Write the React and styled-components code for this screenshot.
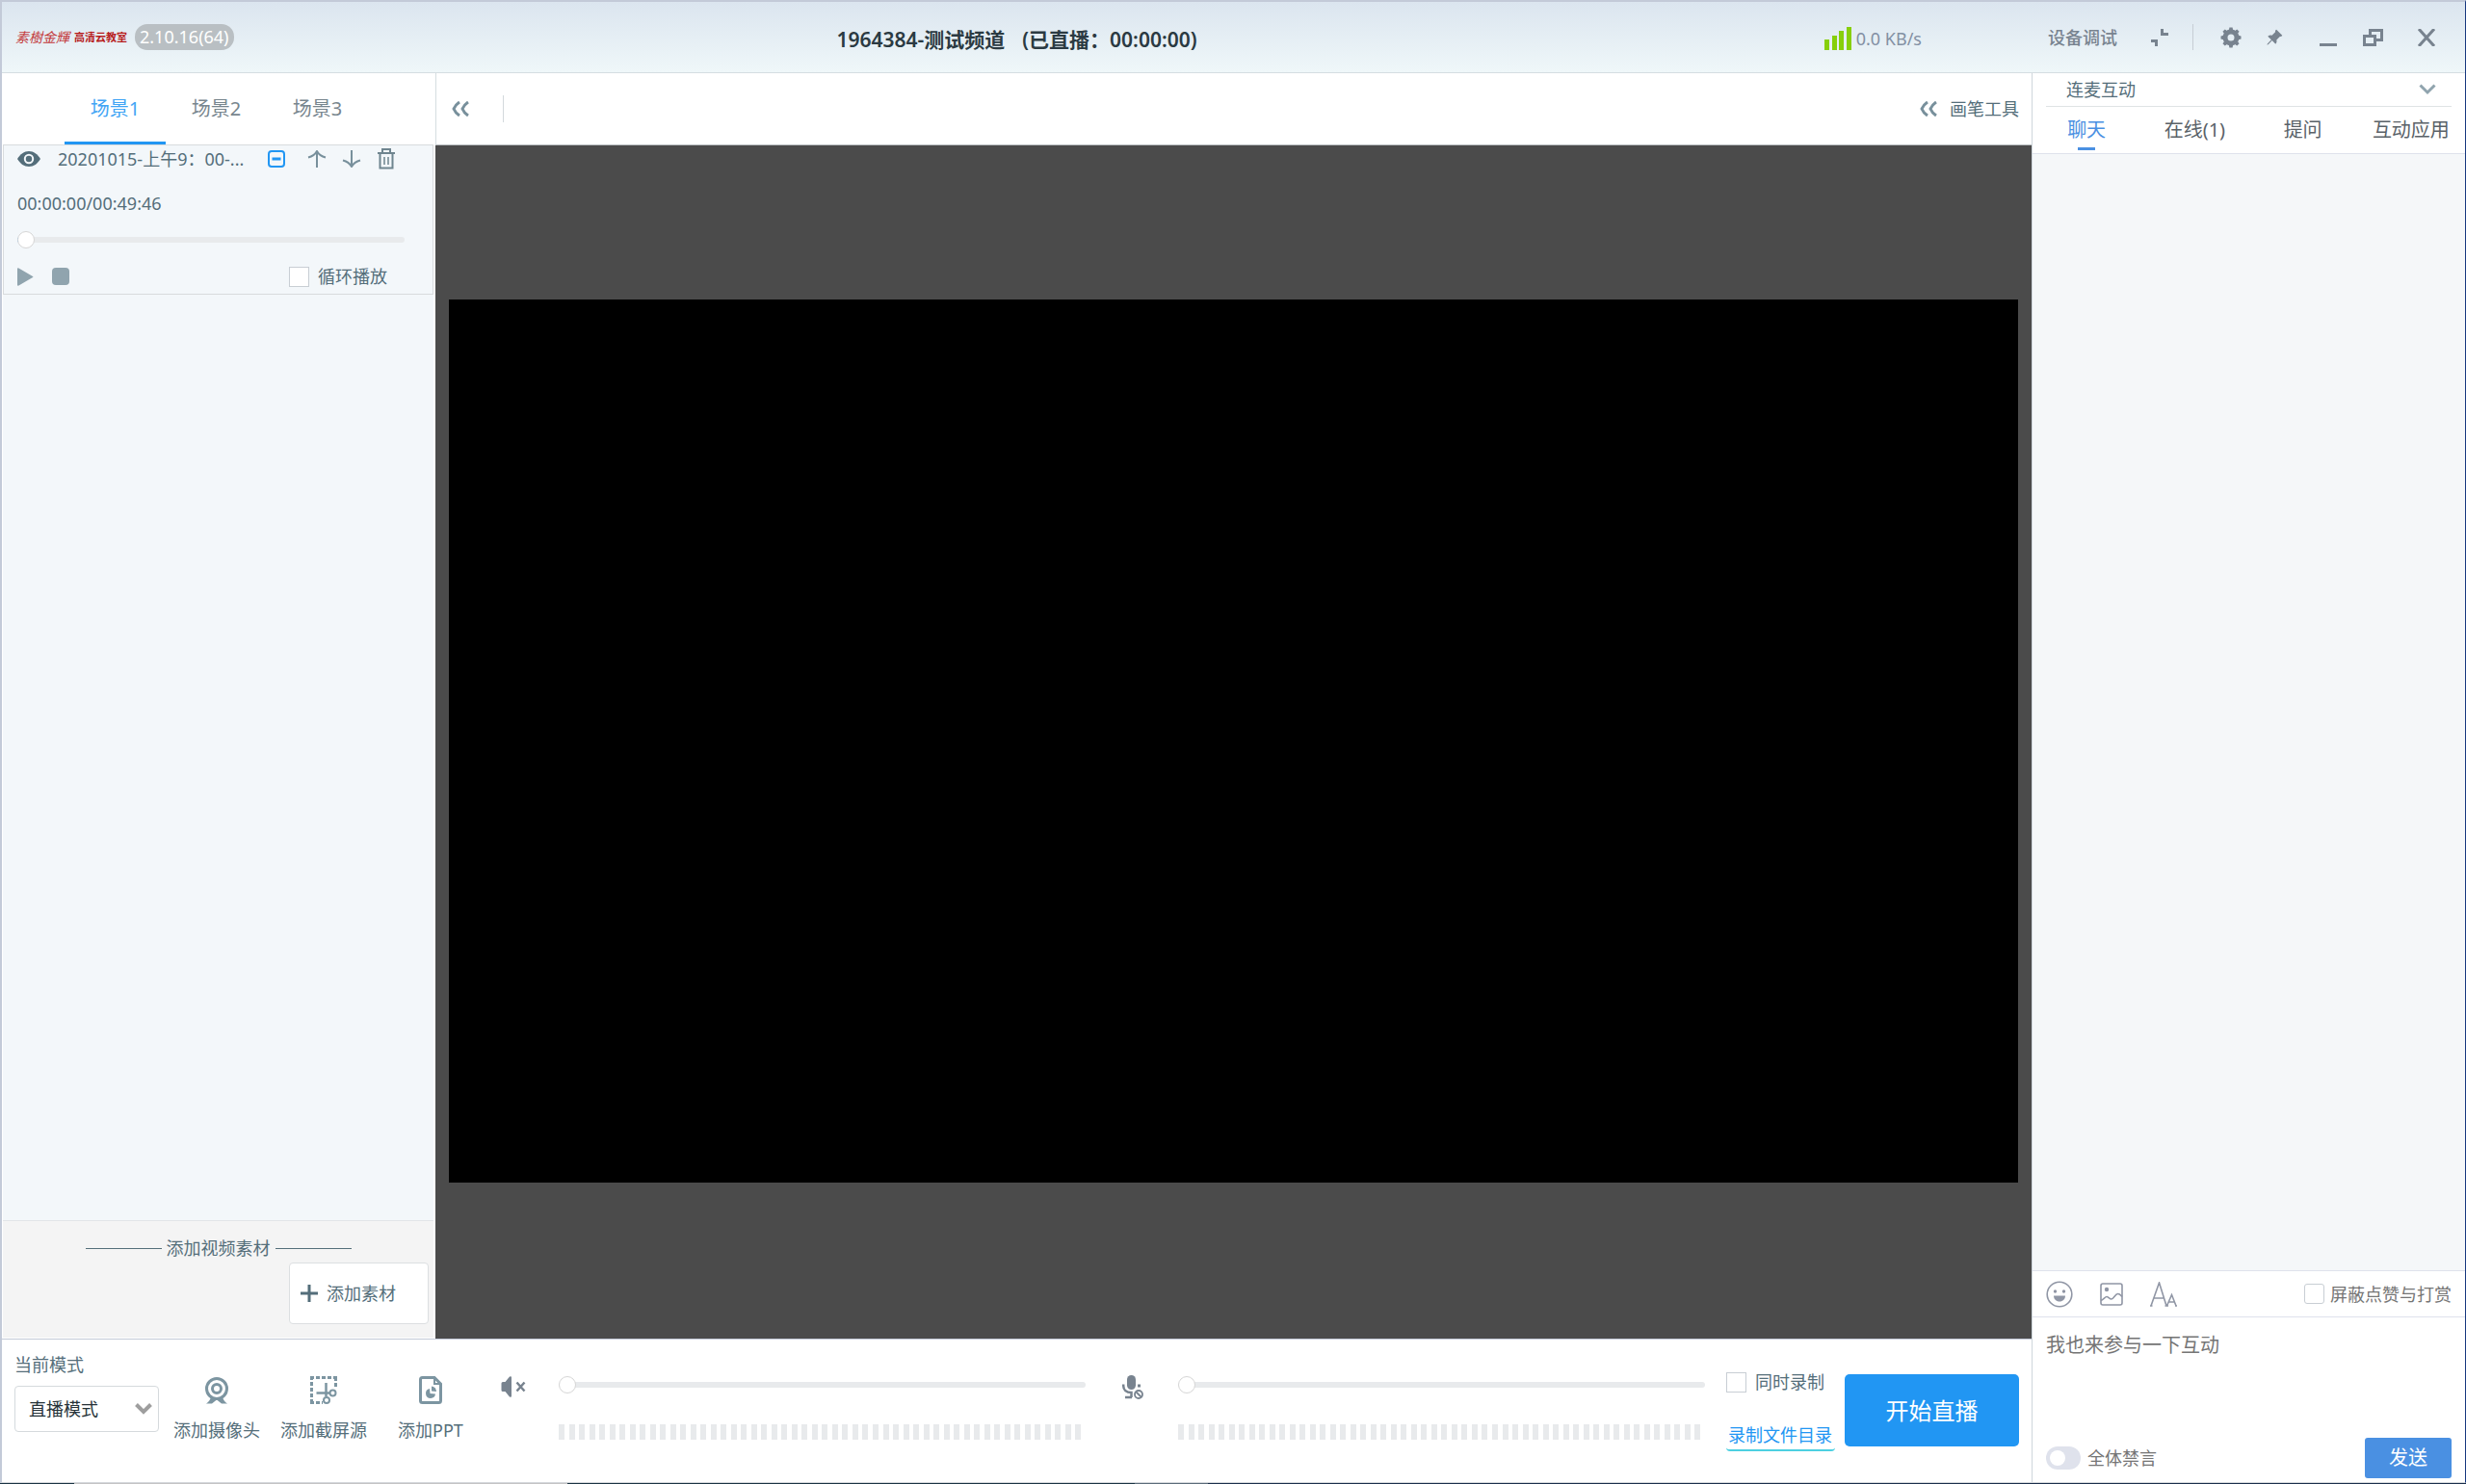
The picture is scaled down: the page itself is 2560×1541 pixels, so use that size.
import styled, { createGlobalStyle } from "styled-components";
import React, { useState } from 'react';
import { BsPinAngleFill } from "react-icons/bs";

const GlobalStyle = createGlobalStyle`
  * {
    box-sizing: border-box;
  }

  body {
    margin: 0;
    color: #546e7a;
    font-family: "Noto Sans", "Noto Sans CJK SC", sans-serif;
    font-size: 18px;
    line-height: 24px;
  }

  button, input, select, textarea {
    font: inherit;
    color: inherit;
    margin: 0;
  }

  button {
    padding: 0;
    border: 0;
    background: none;
    cursor: pointer;
  }

  svg {
    display: block;
    flex: none;
  }
`;

const Page = styled.div`
  display: flex;
  flex-direction: column;
  min-height: 100vh;
`;

const Window = styled.div`
  flex: 1;
  display: flex;
  flex-direction: column;
  border: 2px solid #c3cad8;
  border-right: 1px solid #17387f;
  border-bottom: 1px solid #d5d8dc;
  background: #fff;
`;

const TaskbarEdge = styled.div`
  height: 1px;
  background: linear-gradient(to right,
    #1b3444 3%, #c4c4c4 3%, #c4c4c4 23%,
    #1b3444 23%, #1b3444 46%, #5c6c7a 46%, #5c6c7a 49%, #1b2f4c 49%);
`;

/* header */

const Header = styled.header`
  display: flex;
  height: 74px;
  border-bottom: 1px solid #d5dde1;
  background: linear-gradient(to bottom, #dbe5ef, #eff7f9);
`;

const HeaderMain = styled.div`
  flex: 1;
  display: grid;
  grid-template-columns: 1fr auto 1fr;
  align-items: center;
`;

const Brand = styled.div`
  display: flex;
  align-items: center;
  padding-left: 14px;
`;

const BrandScript = styled.span`
  color: #c33a3c;
  font-size: 14px;
  font-style: italic;
`;

const BrandName = styled.span`
  margin-left: 5px;
  color: #b71c1c;
  font-size: 11px;
  font-weight: 700;
`;

const Version = styled.span`
  margin-left: 8px;
  padding: 0 5px;
  border-radius: 13px;
  background: #b9bfc3;
  color: #fff;
  line-height: 27px;
`;

const Title = styled.h1`
  display: flex;
  gap: 18px;
  margin: 0;
  padding-top: 4px;
  color: #2b3a42;
  font-size: 21px;
  font-weight: 600;
`;

const Signal = styled.div`
  display: flex;
  align-items: center;
  justify-content: flex-end;
  gap: 5px;
  padding: 3px 114px 0 0;
  color: #8390a3;
`;

const HeaderTools = styled.div`
  display: flex;
  align-items: center;
  width: 450px;
  padding: 0 27px 0 17px;
  color: #78838f;
`;

const TextButton = styled.button`
  font-weight: 500;
`;

const IconButton = styled.button`
  display: flex;
  align-items: center;
  justify-content: center;
  width: ${props => props.$width || 24}px;
  height: 28px;
  margin-left: ${props => props.$gap || 0}px;
`;

const HeaderDivider = styled.span`
  width: 1px;
  height: 27px;
  margin-left: 22px;
  background: #c6cdd4;
`;

/* body */

const Body = styled.div`
  flex: 1;
  display: flex;
`;

const Workspace = styled.div`
  flex: 1;
  display: flex;
  flex-direction: column;
  min-width: 0;
`;

const Upper = styled.div`
  flex: 1;
  display: flex;
`;

const Sidebar = styled.aside`
  display: flex;
  flex-direction: column;
  width: 450px;
  border-right: 2px solid #fff;
  border-left: 1px solid #fff;
`;

const SceneTabs = styled.div`
  display: flex;
  height: 74px;
  padding-left: 64px;
`;

const SceneTab = styled.button`
  width: 105px;
  border-top: 3px solid transparent;
  border-bottom: 3px solid ${props => props.$active ? "#2196f3" : "transparent"};
  color: ${props => props.$active ? "#42a5f5" : "#78868e"};
  font-size: 20px;
`;

const SceneList = styled.div`
  flex: 1;
  background: #f3f7fa;
`;

const MediaCard = styled.div`
  padding: 0 29px 4px 14px;
  border: 1px solid #d8dbdd;
`;

const MediaHead = styled.div`
  display: flex;
  align-items: center;
  height: 28px;
  padding-right: 9px;
`;

const MediaName = styled.span`
  flex: 1;
  margin-left: 18px;
  white-space: nowrap;
`;

const MediaTime = styled.div`
  margin: 20px 0 17px;
`;

const MediaFoot = styled.div`
  display: flex;
  align-items: center;
  height: 28px;
  margin-top: 15px;
  padding-right: 18px;
  color: #90a4ae;

  label {
    margin-left: auto;
  }
`;

const Range = styled.input.attrs({ type: "range" })`
  display: block;
  width: 100%;
  height: 18px;
  appearance: none;
  background: transparent;

  &::-webkit-slider-runnable-track {
    height: 6px;
    border-radius: 3px;
    background: ${props => props.$played ? "linear-gradient(to right, #2196f3 3px, #e8eaec 3px)" : "#e8eaec"};
  }

  &::-webkit-slider-thumb {
    appearance: none;
    width: 18px;
    height: 18px;
    margin-top: -6px;
    border: 1px solid #d6d6d6;
    border-radius: 50%;
    background: #fff;
  }
`;

const CheckLabel = styled.label`
  display: flex;
  align-items: center;
  gap: ${props => props.$gap || 9}px;
  color: ${props => props.$color || "#546e7a"};
  white-space: nowrap;
`;

const Checkbox = styled.input.attrs({ type: "checkbox" })`
  appearance: none;
  width: 21px;
  height: 21px;
  border: 1px solid #c8ced4;
  border-radius: ${props => props.$round || 0}px;
  background: #fff;

  &:checked {
    background: #2196f3;
  }
`;

const AddMedia = styled.section`
  display: flex;
  flex-direction: column;
  gap: 3px;
  padding: 16px 5px 14px;
  border-top: 1px solid #e2e5e8;
  border-bottom: 1px solid #fff;
  background: #f4f4f4;
`;

const AddMediaTitle = styled.div`
  display: flex;
  align-items: center;
  justify-content: center;
  gap: 5px;

  &::before, &::after {
    content: "";
    width: 79px;
    height: 1px;
    background: #546e7a;
  }
`;

const AddMediaButton = styled.button`
  display: flex;
  align-items: center;
  align-self: flex-end;
  gap: 9px;
  width: 145px;
  height: 64px;
  padding-left: 11px;
  border: 1px solid #dcdfe1;
  border-radius: 4px;
  background: #fff;
`;

const Center = styled.main`
  flex: 1;
  display: flex;
  flex-direction: column;
`;

const CenterBar = styled.div`
  display: flex;
  align-items: center;
  height: 75px;
  padding: 0 13px;
  border-left: 1px solid #d5dde1;
  border-bottom: 1px solid #b5babd;
`;

const BarDivider = styled.span`
  width: 1px;
  height: 28px;
  margin-left: 32px;
  background: #d3d9dc;
`;

const BrushButton = styled.button`
  display: flex;
  align-items: center;
  gap: 13px;
  margin-left: auto;
`;

const Stage = styled.div`
  flex: 1;
  display: flex;
  align-items: center;
  padding: 0 14px 2px;
  background: #4b4b4b;
`;

const Video = styled.div`
  width: 100%;
  aspect-ratio: 16 / 9;
  background: #000;
`;

/* bottom control bar */

const ControlBar = styled.footer`
  display: flex;
  align-items: flex-start;
  height: 149px;
  padding: 14px 13px 0;
  border-top: 1px solid #c3cad8;
`;

const Mode = styled.label`
  display: flex;
  flex-direction: column;
  gap: 10px;
  width: 150px;
`;

const SelectBox = styled.span`
  position: relative;
  display: block;

  svg {
    position: absolute;
    top: 18px;
    right: 7px;
    pointer-events: none;
  }
`;

const Select = styled.select`
  width: 100%;
  height: 48px;
  padding-left: 14px;
  appearance: none;
  border: 1px solid #d5dadd;
  border-radius: 4px;
  background: #fff;
  color: #263238;
`;

const Sources = styled.div`
  display: flex;
  gap: 21px;
  margin: 22px 28px 0 15px;
`;

const SourceButton = styled.button`
  display: flex;
  flex-direction: column;
  align-items: center;
  gap: 14px;
  min-width: 90px;
  white-space: nowrap;

  svg {
    color: #7c95a1;
  }
`;

const Audio = styled.div`
  flex: 1;
  display: flex;
  align-items: flex-start;
  gap: 34px;
  margin: 22px ${props => props.$gap}px 0 0;
  color: #78838f;
`;

const AudioLevels = styled.div`
  flex: 1;
  padding-top: 2px;
`;

const Meter = styled.div`
  display: flex;
  justify-content: space-between;
  margin-top: 32px;
  padding-right: 4px;
`;

const MeterBar = styled.span`
  width: 6px;
  height: 16px;
  background: #e8eaec;
`;

const Record = styled.div`
  display: flex;
  flex-direction: column;
  gap: 31px;
  width: 113px;
  margin-top: 18px;
`;

const RecordLink = styled.a`
  padding: 0 2px 3px;
  border-bottom: 2px solid #4dd0e1;
  border-radius: 4px;
  color: #2196f3;
  text-decoration: none;
  white-space: nowrap;
`;

const StartButton = styled.button`
  width: 181px;
  height: 75px;
  margin: 22px 0 0 10px;
  border-radius: 5px;
  background: #2196f3;
  color: #fff;
  font-size: 24px;
`;

/* chat panel */

const ChatPanel = styled.aside`
  display: flex;
  flex-direction: column;
  width: 450px;
  border-left: 1px solid #cfd6dc;
`;

const MicHeader = styled.button`
  display: flex;
  align-items: center;
  justify-content: space-between;
  height: 35px;
  margin: 0 14px;
  padding: 0 16px 0 21px;
  border-bottom: 1px solid #dfe3e5;
`;

const ChatTabs = styled.div`
  display: flex;
  height: 49px;
  padding-top: 6px;
  border-bottom: 1px solid #dfe2ec;
`;

const ChatTab = styled.button`
  flex: 1;
  display: flex;
  flex-direction: column;
  align-items: center;
  color: ${props => props.$active ? "#4a90e2" : "#5a6268"};
  font-size: 20px;
  line-height: 36px;

  &::after {
    content: "";
    width: 18px;
    height: 3px;
    background: ${props => props.$active ? "#4a90e2" : "transparent"};
  }
`;

const Messages = styled.div`
  flex: 1;
  background: #f5f7f9;
`;

const ChatTools = styled.div`
  display: flex;
  align-items: center;
  height: 49px;
  padding: 0 14px;
  border-top: 1px solid #dfe2ec;
  border-bottom: 1px solid #dfe2ec;
  color: #9096a5;

  label {
    margin-left: auto;
  }
`;

const MessageInput = styled.textarea`
  height: 125px;
  padding: 17px 14px;
  border: 0;
  outline: 0;
  resize: none;
  background: transparent;
  font-size: 20px;

  &::placeholder {
    color: #757575;
  }
`;

const ChatFoot = styled.div`
  display: flex;
  align-items: center;
  justify-content: space-between;
  padding: 0 14px 4px;
`;

const Switch = styled.input.attrs({ type: "checkbox", role: "switch" })`
  appearance: none;
  display: flex;
  align-items: center;
  width: 36px;
  height: 24px;
  padding: 0 4px;
  border-radius: 12px;
  background: #dfe2ec;

  &::before {
    content: "";
    width: 16px;
    height: 16px;
    border-radius: 50%;
    background: #fff;
  }

  &:checked {
    justify-content: flex-end;
    background: #4a90e2;
  }
`;

const SendButton = styled.button`
  width: 90px;
  height: 42px;
  border-radius: 3px;
  background: #4a90e2;
  color: #fff;
  font-size: 20px;
`;


function SignalIcon() {
  return (
    <svg width="28" height="24" fill="#87cf0a">
      <rect x="0" y="13" width="5" height="11" />
      <rect x="8" y="9" width="5" height="15" />
      <rect x="15" y="4" width="5" height="20" />
      <rect x="23" y="0" width="5" height="24" />
    </svg>
  );
}

function CollapseIcon() {
  return (
    <svg width="18" height="18" fill="none" stroke="currentColor" strokeWidth="3">
      <path d="M11.5 0V5.5H18M0 12.5H5.5V18" />
    </svg>
  );
}

function GearIcon() {
  return (
    <svg width="22" height="22" viewBox="0 0 22 22" fill="none" stroke="currentColor">
      <circle cx="11" cy="11" r="6" strokeWidth="5" />
      {[0, 45, 90, 135, 180, 225, 270, 315].map(angle => (
        <path key={angle} d="M8.800 3.500L9.400 .5H12.600L13.200 3.500z" fill="currentColor" stroke="none" transform={`rotate(${angle} 11 11)`} />
      ))}
    </svg>
  );
}

function MinimizeIcon() {
  return (
    <svg width="18" height="18" fill="currentColor"><rect y="15" width="18" height="3" /></svg>
  );
}

function RestoreIcon() {
  return (
    <svg width="21" height="18" fill="none" stroke="currentColor" strokeWidth="3">
      <path d="M1.5 7.5H12.5V16.5H1.5zM7.5 7V1.5H19.5V11.5H13" />
    </svg>
  );
}

function CloseIcon() {
  return (
    <svg width="18" height="18" fill="none" stroke="currentColor" strokeWidth="3">
      <path d="M1 0L17 18M17 0L1 18" />
    </svg>
  );
}

function DoubleChevron() {
  return (
    <svg width="18" height="16" fill="none" stroke="#78909c" strokeWidth="3">
      <path d="M8 1C5 3 3 5.500 2 8C3 10.500 5 13 8 15M17 1C14 3 12 5.500 11 8C12 10.500 14 13 17 15" />
    </svg>
  );
}

function ChevronDown({ color, stroke }) {
  return (
    <svg width="18" height="12" fill="none" stroke={color} strokeWidth={stroke}>
      <path d="M1.500 1.500L9 9L16.500 1.500" />
    </svg>
  );
}

function EyeIcon() {
  return (
    <svg width="24" height="16" viewBox="0 0 24 16">
      <path d="M0 8C3 3 7 0 12 0S21 3 24 8C21 13 17 16 12 16S3 13 0 8z" fill="#546e7a" />
      <circle cx="12" cy="8" r="4.200" fill="#546e7a" stroke="#f3f7fa" strokeWidth="2" />
    </svg>
  );
}

function MinusBoxIcon() {
  return (
    <svg width="18" height="18" fill="none" stroke="#2196f3">
      <rect x="1" y="1" width="16" height="16" rx="3" strokeWidth="2" />
      <path d="M4.500 9H13.500" strokeWidth="3" />
    </svg>
  );
}

function ArrowIcon({ down }) {
  return (
    <svg width="20" height="18" fill="none" stroke="#78909c" strokeWidth="2">
      <path d={down ? "M10 0V17M1 10.500C5 11.500 8 13.500 10 17C12 13.500 15 11.500 19 10.500" : "M10 18V1M1 7.500C5 6.500 8 4.500 10 1C12 4.500 15 6.500 19 7.500"} />
    </svg>
  );
}

function TrashIcon() {
  return (
    <svg width="18" height="22" fill="none" stroke="#6f858f" strokeWidth="2">
      <path d="M0 5H18M5 4.500V1H13V4.500M2.500 5V20.500H15.500V5" />
      <path d="M7 9V17M11 9V17" strokeWidth="1.500" />
    </svg>
  );
}

function CameraIcon() {
  return (
    <svg width="26" height="32" viewBox="0 0 26 32" fill="none" stroke="currentColor">
      <circle cx="13" cy="15" r="10.500" strokeWidth="3" />
      <circle cx="13" cy="15" r="4.500" strokeWidth="3" />
      <path d="M7 24C6 27 4.500 29 2 30.500H8L13 26.500L18 30.500H24C21.500 29 20 27 19 24C15 26.500 11 26.500 7 24z" fill="currentColor" stroke="none" />
    </svg>
  );
}

function ScreenshotIcon() {
  return (
    <svg width="28" height="32" viewBox="0 0 28 32" fill="none" stroke="currentColor">
      <path d="M0 3.500H28M1.500 2V31M26.500 3V15M0 29.500H13" strokeWidth="3" strokeDasharray="4 2" />
      <path d="M16.500 9V23M6.500 19.500H22" strokeWidth="2.500" />
      <circle cx="23.500" cy="19.500" r="3" strokeWidth="2" fill="#fff" />
      <circle cx="17" cy="27" r="3" strokeWidth="2" fill="#fff" />
    </svg>
  );
}

function PptIcon() {
  return (
    <svg width="24" height="32" viewBox="0 0 24 32" fill="none" stroke="currentColor" strokeWidth="3">
      <path d="M16 3.500H3.500Q1.500 3.500 1.500 5.500V27.500Q1.500 29.500 3.500 29.500H20.500Q22.500 29.500 22.500 27.500V10z" />
      <path d="M16 3.500V10H22.500" strokeWidth="2" />
      <path d="M11 15A5 5 0 1 0 17 20.500L11.500 20z" fill="currentColor" stroke="none" />
      <path d="M13 12.500A5.500 5.500 0 0 1 18 18L13 17.500z" fill="currentColor" stroke="none" />
    </svg>
  );
}

function MuteIcon() {
  return (
    <svg width="26" height="26" viewBox="0 0 26 26" fill="currentColor">
      <path d="M2 7H4.500L9 1.500Q11 .5 11 2.500V21.500Q11 23.500 9 22.500L4.500 17H2Q.5 17 .5 15.500V8.500Q.5 7 2 7z" />
      <path d="M16.500 7.500L24.500 16.500M24.500 7.500L16.500 16.500" stroke="currentColor" strokeWidth="2.500" fill="none" />
    </svg>
  );
}

function MicIcon() {
  return (
    <svg width="24" height="26" viewBox="0 0 24 26" fill="none" stroke="currentColor" strokeWidth="2.500">
      <rect x="6" y="0" width="9" height="15" rx="4.500" fill="currentColor" stroke="none" />
      <path d="M2.200 9.500V11C2.200 15 5 18 10.500 18V23M4 23H11" />
      <rect x="17" y="9.500" width="3" height="3" fill="currentColor" stroke="none" />
      <circle cx="18" cy="20" r="4" strokeWidth="1.800" />
      <path d="M15.500 17.500L20.500 22.500" strokeWidth="1.800" />
    </svg>
  );
}

function EmojiIcon() {
  return (
    <svg width="28" height="28" viewBox="0 0 28 28" fill="none" stroke="currentColor" strokeWidth="2">
      <circle cx="14" cy="14" r="12.800" strokeWidth="1.600" />
      <circle cx="9.500" cy="11" r="1.700" fill="currentColor" stroke="none" />
      <circle cx="18.500" cy="11" r="1.700" fill="currentColor" stroke="none" />
      <path d="M8 15.500H20C20 19 17.500 21.500 14 21.500S8 19 8 15.500z" fill="currentColor" stroke="none" />
    </svg>
  );
}

function ImageIcon() {
  return (
    <svg width="24" height="24" viewBox="0 0 24 24" fill="none" stroke="currentColor" strokeWidth="1.600">
      <rect x="1" y="1" width="22" height="22" rx="2" />
      <circle cx="7" cy="7" r="2.200" fill="currentColor" stroke="none" />
      <path d="M1 18.500C4 17 5.500 14.500 7 14.500S10 17 12 17S16 11.500 18.500 11.500S21.500 13 23 14.500" />
    </svg>
  );
}

function FontIcon() {
  return (
    <svg width="28" height="26" viewBox="0 0 28 26" fill="none" stroke="currentColor" strokeWidth="1.600">
      <path d="M1 25L9.500 1L17 25M4.500 17H14M17.500 25L22.500 13.500L27 25M19.500 21H25.500M0 25H2.500M15.500 25H19M26 25H28" />
    </svg>
  );
}


const scenes = ["场景1", "场景2", "场景3"];
const chatTabs = ["聊天", "在线(1)", "提问", "互动应用"];
const meterBars = Array.from({ length: 52 }, (_, i) => i);

function AudioControl({ label, icon, gap }) {
  return (
    <Audio $gap={gap}>
      <IconButton $width={26} aria-label={label}>{icon}</IconButton>
      <AudioLevels>
        <Range defaultValue={0} aria-label={label} />
        <Meter>
          {meterBars.map(i => <MeterBar key={i} />)}
        </Meter>
      </AudioLevels>
    </Audio>
  );
}

function App() {

  const [scene, setScene] = useState(scenes[0]);
  const [chatTab, setChatTab] = useState(chatTabs[0]);

  return (
    <Page>
      <GlobalStyle />
      <Window>
        <Header>
          <HeaderMain>
            <Brand>
              <BrandScript>素樹金輝</BrandScript>
              <BrandName>高清云教室</BrandName>
              <Version>2.10.16(64)</Version>
            </Brand>
            <Title>
              <span>1964384-测试频道</span>
              <span>(已直播：00:00:00)</span>
            </Title>
            <Signal>
              <SignalIcon />
              <span>0.0 KB/s</span>
            </Signal>
          </HeaderMain>
          <HeaderTools>
            <TextButton>设备调试</TextButton>
            <IconButton $gap={32} aria-label="收起"><CollapseIcon /></IconButton>
            <HeaderDivider />
            <IconButton $gap={27} aria-label="设置"><GearIcon /></IconButton>
            <IconButton $gap={21} aria-label="置顶"><BsPinAngleFill size={18} /></IconButton>
            <IconButton $gap={32} aria-label="最小化"><MinimizeIcon /></IconButton>
            <IconButton $gap={22} aria-label="还原"><RestoreIcon /></IconButton>
            <IconButton $gap={32} aria-label="关闭"><CloseIcon /></IconButton>
          </HeaderTools>
        </Header>

        <Body>
          <Workspace>
            <Upper>
              <Sidebar>
                <SceneTabs>
                  {scenes.map(name => (
                    <SceneTab key={name} $active={name === scene} onClick={() => setScene(name)}>{name}</SceneTab>
                  ))}
                </SceneTabs>
                <SceneList>
                  <MediaCard>
                    <MediaHead>
                      <EyeIcon />
                      <MediaName>20201015-上午9：00-...</MediaName>
                      <IconButton $width={20} aria-label="折叠"><MinusBoxIcon /></IconButton>
                      <IconButton $width={20} $gap={22} aria-label="上移"><ArrowIcon /></IconButton>
                      <IconButton $width={20} $gap={16} aria-label="下移"><ArrowIcon down /></IconButton>
                      <IconButton $width={20} $gap={16} aria-label="删除"><TrashIcon /></IconButton>
                    </MediaHead>
                    <MediaTime>00:00:00/00:49:46</MediaTime>
                    <Range $played defaultValue={0} aria-label="播放进度" />
                    <MediaFoot>
                      <IconButton $width={18} aria-label="播放">
                        <svg width="18" height="19" fill="currentColor"><path d="M0 1Q0 0 1.500 .5L16 9Q17 9.500 16 10L1.500 18.500Q0 19 0 18z" /></svg>
                      </IconButton>
                      <IconButton $width={18} $gap={18} aria-label="停止">
                        <svg width="18" height="18" fill="currentColor"><rect width="18" height="18" rx="4" /></svg>
                      </IconButton>
                      <CheckLabel>
                        <Checkbox />循环播放
                      </CheckLabel>
                    </MediaFoot>
                  </MediaCard>
                </SceneList>
                <AddMedia>
                  <AddMediaTitle>添加视频素材</AddMediaTitle>
                  <AddMediaButton>
                    <svg width="18" height="18" stroke="#546e7a" strokeWidth="3"><path d="M9 0V18M0 9H18" /></svg>
                    添加素材
                  </AddMediaButton>
                </AddMedia>
              </Sidebar>

              <Center>
                <CenterBar>
                  <IconButton aria-label="展开"><DoubleChevron /></IconButton>
                  <BarDivider />
                  <BrushButton><DoubleChevron />画笔工具</BrushButton>
                </CenterBar>
                <Stage>
                  <Video />
                </Stage>
              </Center>
            </Upper>

            <ControlBar>
              <Mode>
                当前模式
                <SelectBox>
                  <Select>
                    <option>直播模式</option>
                  </Select>
                  <ChevronDown color="#9e9e9e" stroke={4} />
                </SelectBox>
              </Mode>
              <Sources>
                <SourceButton><CameraIcon />添加摄像头</SourceButton>
                <SourceButton><ScreenshotIcon />添加截屏源</SourceButton>
                <SourceButton><PptIcon />添加PPT</SourceButton>
              </Sources>
              <AudioControl label="扬声器" icon={<MuteIcon />} gap={36} />
              <AudioControl label="麦克风" icon={<MicIcon />} gap={22} />
              <Record>
                <CheckLabel><Checkbox />同时录制</CheckLabel>
                <RecordLink href="#record">录制文件目录</RecordLink>
              </Record>
              <StartButton>开始直播</StartButton>
            </ControlBar>
          </Workspace>

          <ChatPanel>
            <MicHeader>
              连麦互动
              <ChevronDown color="#90a4ae" stroke={3} />
            </MicHeader>
            <ChatTabs>
              {chatTabs.map(name => (
                <ChatTab key={name} $active={name === chatTab} onClick={() => setChatTab(name)}>{name}</ChatTab>
              ))}
            </ChatTabs>
            <Messages />
            <ChatTools>
              <IconButton $width={28} aria-label="表情"><EmojiIcon /></IconButton>
              <IconButton $gap={28} aria-label="图片"><ImageIcon /></IconButton>
              <IconButton $width={28} $gap={28} aria-label="字体"><FontIcon /></IconButton>
              <CheckLabel $gap={6} $color="#757575">
                <Checkbox $round={3} />屏蔽点赞与打赏
              </CheckLabel>
            </ChatTools>
            <MessageInput placeholder="我也来参与一下互动" aria-label="聊天内容" />
            <ChatFoot>
              <CheckLabel $gap={7} $color="#757575">
                <Switch />全体禁言
              </CheckLabel>
              <SendButton>发送</SendButton>
            </ChatFoot>
          </ChatPanel>
        </Body>
      </Window>
      <TaskbarEdge />
    </Page>
  );
}

export default App;
